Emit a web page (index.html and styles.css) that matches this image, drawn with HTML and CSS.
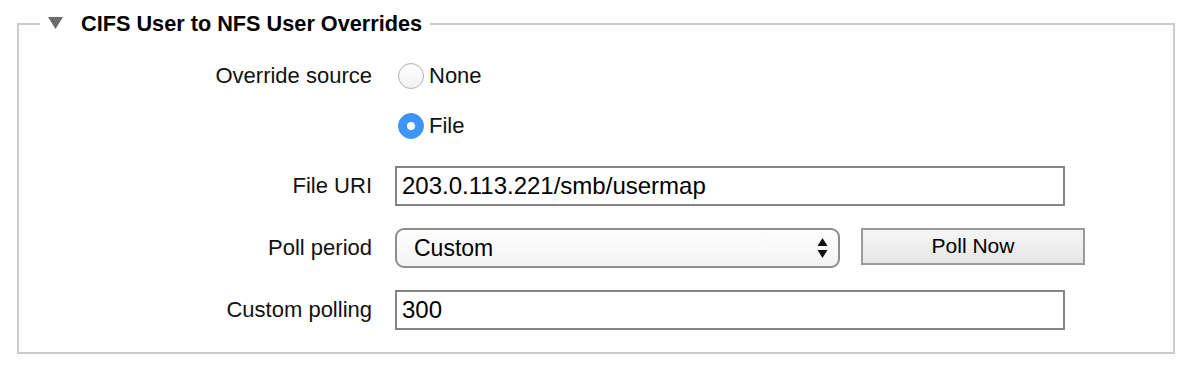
FILE: index.html
```html
<!DOCTYPE html>
<html lang="en">
<head>
  <meta charset="UTF-8" />
  <title>CIFS User to NFS User Overrides</title>
  <link rel="stylesheet" href="styles.css">
</head>
<body>
  <fieldset class="panel">
    <legend class="panel-title">
      <svg class="caret" width="15" height="12" viewBox="0 0 15 12"><polygon points="0,0 15,0 7.5,12" fill="#6b6b6b"/></svg>
      CIFS User to NFS User Overrides
    </legend>
    <div class="form">
      <div class="label">Override source</div>
      <div class="radios">
        <label class="radio"><span class="dot"></span>None</label>
        <label class="radio"><span class="dot checked"></span>File</label>
      </div>

      <div class="label">File URI</div>
      <div class="control"><div class="text-input">203.0.113.221/smb/usermap</div></div>

      <div class="label">Poll period</div>
      <div class="control row">
        <div class="select">
          <span>Custom</span>
          <svg class="arrows" width="11" height="22" viewBox="0 0 11 22"><polygon points="5.5,1 10.5,9 0.5,9" fill="#111"/><polygon points="0.5,13 10.5,13 5.5,21" fill="#111"/></svg>
        </div>
        <div class="button">Poll Now</div>
      </div>

      <div class="label">Custom polling</div>
      <div class="control"><div class="text-input">300</div></div>
    </div>
  </fieldset>
</body>
</html>
```
FILE: styles.css
```css
body {
  margin: 0;
  font-family: "Liberation Sans", Arial, sans-serif;
  background: #fff;
  color: #111;
}
.panel {
  margin: 11px 16px 0 17px;
  padding: 25px 0 22px 0;
  border: 2px solid #cacaca;
  min-width: 0;
}
.panel-title {
  margin-left: 21px;
  padding: 0 8px 0 8px;
  font-size: 21.7px;
  font-weight: bold;
  line-height: 26px;
  color: #000;
}
.caret {
  margin-right: 12px;
  vertical-align: 2px;
}
.form {
  display: grid;
  grid-template-columns: 353px 1fr;
  column-gap: 23px;
  row-gap: 22px;
  font-size: 22px;
}
.label {
  text-align: right;
  line-height: 28px;
  align-self: start;
}
.form .label:nth-child(n+3) {
  line-height: 40px;
}
.radios {
  display: flex;
  flex-direction: column;
  gap: 22px;
  padding-bottom: 4px;
}
.radio {
  display: flex;
  align-items: center;
  height: 28px;
  margin-left: 3px;
}
.dot {
  width: 24px;
  height: 24px;
  border-radius: 50%;
  border: 1px solid #b3b3b3;
  background: linear-gradient(#fff, #f2f2f2);
  box-shadow: inset 0 1px 1px rgba(0, 0, 0, 0.05);
  margin-right: 5px;
  position: relative;
}
.dot.checked {
  border-color: #3d95f7;
  background: #3d95f7;
}
.dot.checked::after {
  content: "";
  position: absolute;
  left: 8px;
  top: 8px;
  width: 8px;
  height: 8px;
  border-radius: 50%;
  background: #fff;
}
.control {
  display: flex;
}
.row {
  gap: 21px;
  align-items: flex-start;
}
.text-input {
  width: 670px;
  height: 40px;
  box-sizing: border-box;
  border: 2px solid #858585;
  padding: 0 5px;
  line-height: 36px;
  font-size: 24px;
  color: #000;
}
.select {
  width: 445px;
  height: 40px;
  box-sizing: border-box;
  border: 2px solid #8d8d8d;
  border-radius: 9px;
  background: linear-gradient(#fdfdfd, #f4f4f4);
  display: flex;
  align-items: center;
  justify-content: space-between;
  padding: 0 10px 0 17px;
  font-size: 23px;
  color: #000;
}
.button {
  width: 224px;
  height: 37px;
  box-sizing: border-box;
  border: 2px solid #9a9a9a;
  background: linear-gradient(#f6f6f6, #e6e6e6);
  text-align: center;
  line-height: 32px;
  font-size: 21px;
  color: #000;
}
```
